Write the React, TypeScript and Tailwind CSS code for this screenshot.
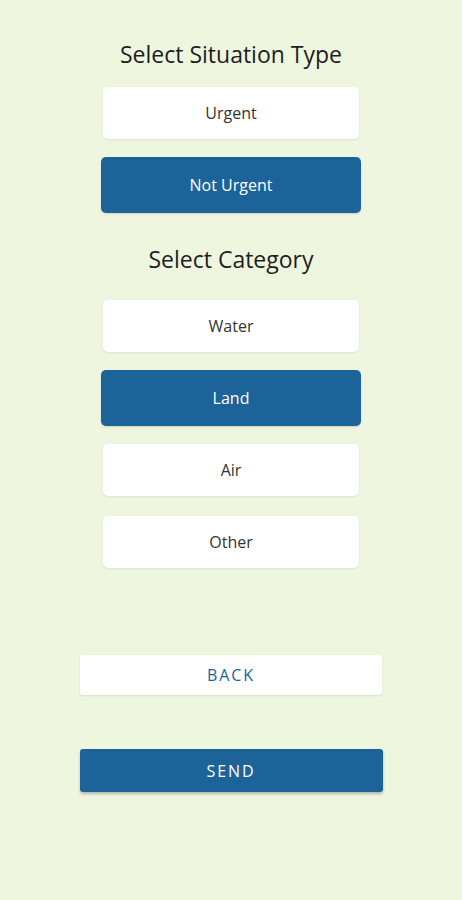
import React, { useState } from 'react';

const situations = ['Urgent', 'Not Urgent'];
const categories = ['Water', 'Land', 'Air', 'Other'];

const OptionButton: React.FC<{ label: string; selected: boolean; onClick: () => void }> = ({
  label,
  selected,
  onClick,
}) => (
  <div className="h-[72px] flex items-center justify-center">
    <button
      onClick={onClick}
      className={`rounded-[5px] text-[16px] ${
        selected
          ? 'w-[260px] h-[56px] bg-[#1b6398] text-white shadow-[0_1px_2px_rgba(0,0,0,0.15)]'
          : 'w-[256px] h-[52px] bg-white text-[#333333] shadow-[0_1px_2px_rgba(0,0,0,0.08)]'
      }`}
    >
      {label}
    </button>
  </div>
);

export default function App() {
  const [situation, setSituation] = useState('Not Urgent');
  const [category, setCategory] = useState('Land');

  return (
    <div
      className="w-[462px] h-[900px] bg-[#eff6e0] flex flex-col items-center pt-[39px]"
      style={{ fontFamily: '"Open Sans", sans-serif' }}
    >
      <h1 className="text-[23px] leading-[30px] text-[#1e1e1e]">Select Situation Type</h1>
      <div className="mt-[8px] flex flex-col">
        {situations.map((s) => (
          <OptionButton key={s} label={s} selected={situation === s} onClick={() => setSituation(s)} />
        ))}
      </div>

      <h2 className="mt-[23px] text-[23px] leading-[30px] text-[#1e1e1e]">Select Category</h2>
      <div className="mt-[16px] flex flex-col">
        {categories.map((c) => (
          <OptionButton key={c} label={c} selected={category === c} onClick={() => setCategory(c)} />
        ))}
      </div>

      <button className="mt-[77px] w-[302px] h-[40px] bg-white rounded-[3px] text-[#1b6398] text-[16px] tracking-[0.12em] shadow-[0_1px_2px_rgba(0,0,0,0.1)]">
        BACK
      </button>
      <button className="mt-[54px] w-[303px] h-[43px] bg-[#1b6398] rounded-[3px] text-white text-[16px] tracking-[0.12em] shadow-[0_2px_3px_rgba(0,0,0,0.25)]">
        SEND
      </button>
    </div>
  );
}
